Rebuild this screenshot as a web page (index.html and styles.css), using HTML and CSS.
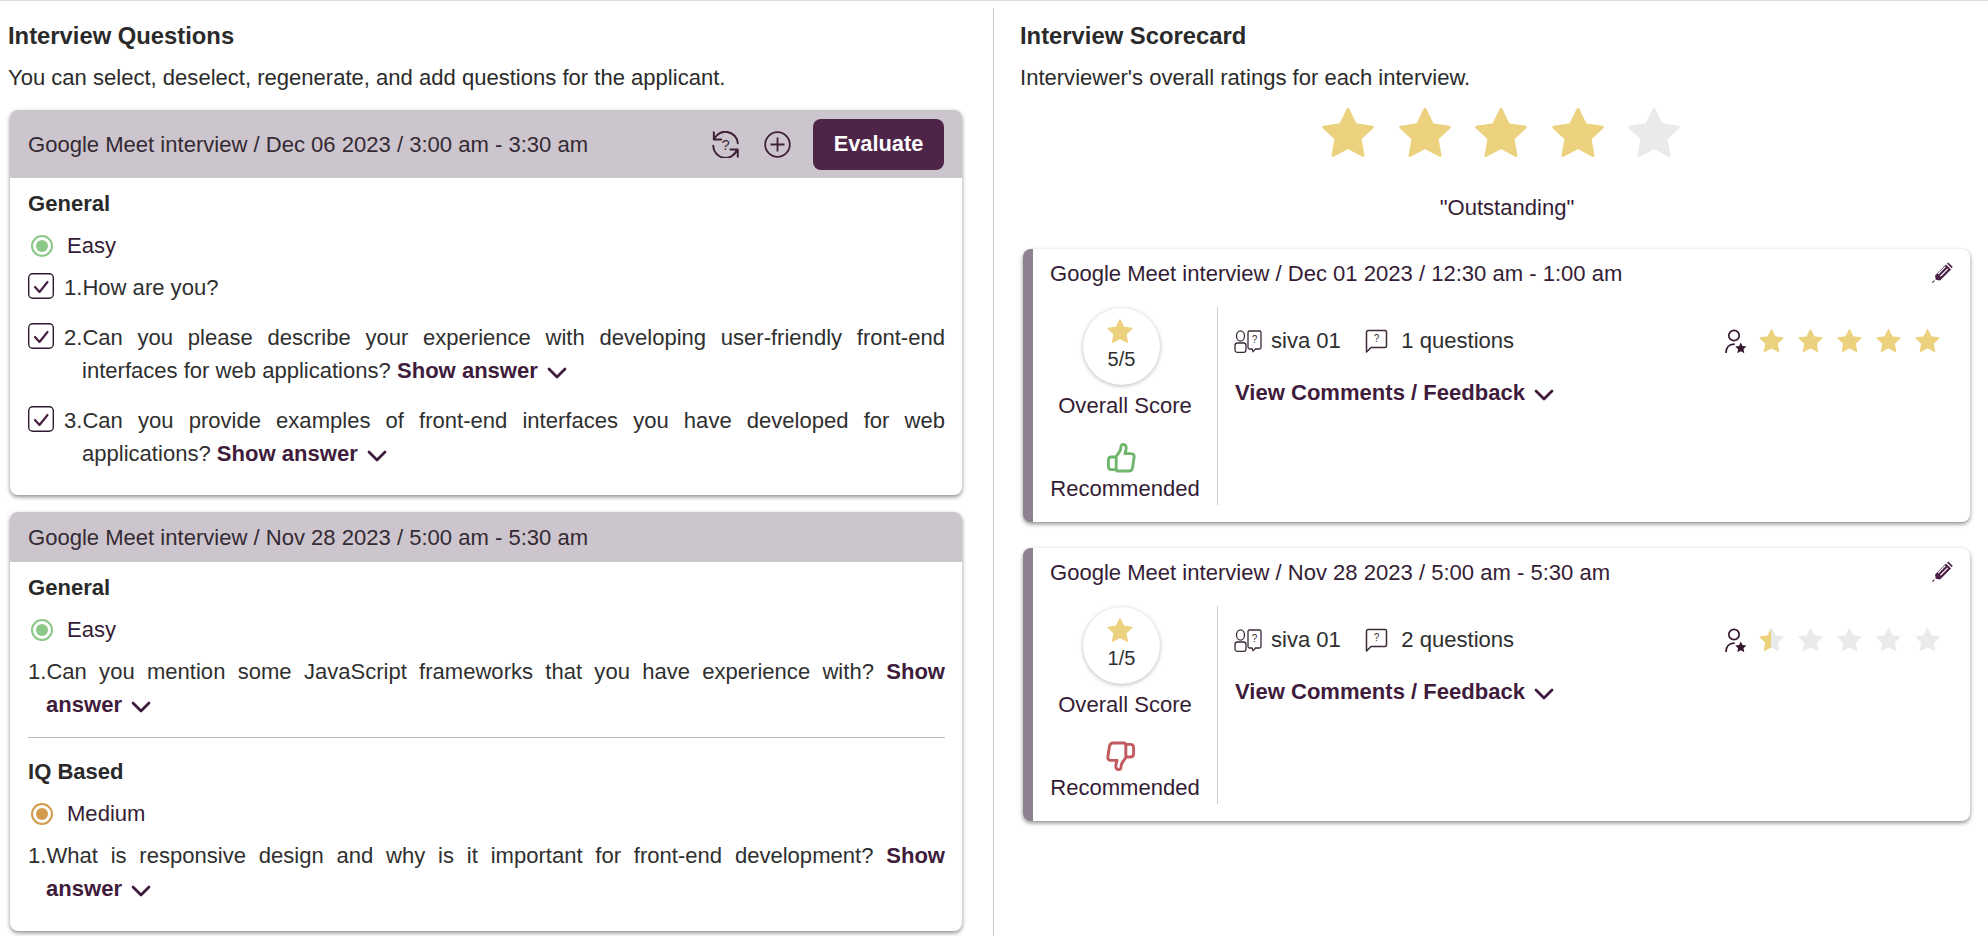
FILE: index.html
```html
<!DOCTYPE html>
<html lang="en">
<head>
<meta charset="utf-8">
<title>Interview</title>
<link rel="stylesheet" href="styles.css">
</head>
<body>
<svg class="sprite" aria-hidden="true">
  <defs>
    <linearGradient id="half-fill" x1="0" x2="1" y1="0" y2="0">
      <stop offset="0.5" stop-color="#ecd27f"/>
      <stop offset="0.5" stop-color="#e9ebeb"/>
    </linearGradient>
    <symbol id="star" viewBox="1 1.5 22 21">
      <path d="M12 2.500L15.060 8.790 22 9.800 16.950 14.600 18.200 21.500 12 18.200 5.800 21.500 7.050 14.600 2 9.800 8.940 8.790z" stroke-width="1.200" stroke-linejoin="round"/>
    </symbol>
    <symbol id="chev" viewBox="0 0 20 12">
      <path d="M2 2l8 8 8-8" fill="none" stroke="currentColor" stroke-width="2.800" stroke-linecap="round" stroke-linejoin="round"/>
    </symbol>
    <symbol id="check" viewBox="0 0 26 26">
      <rect x=".7" y=".7" width="24.600" height="24.600" rx="4" fill="none" stroke="#2e1a2e" stroke-width="1.400"/>
      <path d="M7 14l4.500 5L19.500 9" fill="none" stroke="#4a1f44" stroke-width="2.200" stroke-linecap="round" stroke-linejoin="round"/>
    </symbol>
    <symbol id="users" viewBox="0 0 28 24">
      <ellipse cx="6.500" cy="7" rx="4" ry="5.200" fill="none" stroke="#3a2a3a" stroke-width="1.300"/>
      <rect x="1" y="14" width="11" height="9.300" rx="2.400" fill="none" stroke="#3a2a3a" stroke-width="1.300"/>
      <path d="M15.500 2h10a1.500 1.500 0 0 1 1.500 1.500v15a1.500 1.500 0 0 1-1.500 1.500h-4l-2.500 2.600-1-2.600h-2.500a1.500 1.500 0 0 1-1.500-1.500v-15a1.500 1.500 0 0 1 1.500-1.500z" fill="none" stroke="#3a2a3a" stroke-width="1.300"/>
      <text x="20.500" y="13.500" class="glyph">?</text>
    </symbol>
    <symbol id="chat" viewBox="0 0 23 24">
      <path d="M1.500 23V3a1.500 1.500 0 0 1 1.500-1.500h17a1.500 1.500 0 0 1 1.500 1.500v14a1.500 1.500 0 0 1-1.500 1.500H6z" fill="none" stroke="#3a2a3a" stroke-width="1.500" stroke-linejoin="round"/>
      <text x="11.500" y="12.500" class="glyph">?</text>
    </symbol>
    <symbol id="rater" viewBox="0 0 22 24">
      <circle cx="9" cy="6.500" r="5.200" fill="none" stroke="#35182f" stroke-width="1.700"/>
      <path d="M1 23.500c0-5 3-8.300 8-8.300" fill="none" stroke="#35182f" stroke-width="1.700" stroke-linecap="round"/>
      <path d="M15.800 13.500l1.700 3.600 3.900.5-2.900 2.700.8 3.900-3.500-1.900-3.500 1.900.8-3.900-2.900-2.700 3.900-.5z" fill="#35182f"/>
    </symbol>
    <symbol id="pencil" viewBox="0 0 20 20">
      <path d="M.3 19.700l2-2" stroke="#4a1f44" stroke-width="1" fill="none"/>
      <path d="M3.500 17l-.6-4.200L13.300 2.400l4.800 4.800L7.700 17.600z" fill="#4a1f44"/>
      <path d="M5.800 11.400l7-7M8 13.600l7-7" stroke="#fff" stroke-width="1.100" fill="none"/>
      <path d="M14.300 1.400l1.200-1 4.200 4.200-1 1.300z" fill="#4a1f44"/>
    </symbol>
    <symbol id="thumb" viewBox="0 0 30 32">
      <path d="M10 15l3.500-5c1.200-1.700 1.500-3.200 1.500-5.200 0-3.300 5-3.300 5.300.8.200 2.400-.6 4.400-1.300 6.400h6.500c2.500 0 3.500 2 3 4l-1.600 10.500c-.4 2-1.700 3.500-3.700 3.500H12.500c-1.500 0-2.500-.8-2.500-2.500zM10 15.500H5C3 15.500 2 17 2 19v6c0 2 1 3.500 3 3.500h5" fill="none" stroke="currentColor" stroke-width="3" stroke-linejoin="round" stroke-linecap="round"/>
    </symbol>
  </defs>
</svg>

<main class="page">
  <section class="col col-left">
    <h2 class="title">Interview Questions</h2>
    <p class="sub">You can select, deselect, regenerate, and add questions for the applicant.</p>

    <article class="qcard">
      <header class="qhead qhead-tall">
        <span class="qhead-text">Google Meet interview / Dec 06 2023 / 3:00 am - 3:30 am</span>
        <svg class="ic-regen" viewBox="2 2 22 22">
          <path d="M3.500 3v6h6M3.700 9A10 10 0 0 1 23 12M23 23v-6h-6M22.500 17A10 10 0 0 1 3 14" fill="none" stroke="#3e2038" stroke-width="1.600" stroke-linecap="round" stroke-linejoin="round"/>
          <text x="13" y="17.500" class="glyph glyph-lg">?</text>
        </svg>
        <svg class="ic-plus" viewBox="0 0 27 27">
          <circle cx="13.500" cy="13.500" r="12.300" fill="none" stroke="#3e2038" stroke-width="1.800"/>
          <path d="M13.500 6.500v14M6.500 13.500h14" stroke="#3e2038" stroke-width="1.800"/>
        </svg>
        <button class="btn">Evaluate</button>
      </header>
      <div class="qbody qbody-short">
        <h3 class="group">General</h3>
        <div class="level"><span class="dot dot-easy"></span>Easy</div>
        <div class="qrow first">
          <svg class="check"><use href="#check"/></svg>
          <p class="q">1.How are you?</p>
        </div>
        <div class="qrow">
          <svg class="check"><use href="#check"/></svg>
          <p class="q">2.Can you please describe your experience with developing user-friendly front-end interfaces for web applications? <a class="more">Show answer <svg class="chev"><use href="#chev"/></svg></a></p>
        </div>
        <div class="qrow">
          <svg class="check"><use href="#check"/></svg>
          <p class="q">3.Can you provide examples of front-end interfaces you have developed for web applications? <a class="more">Show answer <svg class="chev"><use href="#chev"/></svg></a></p>
        </div>
      </div>
    </article>

    <article class="qcard">
      <header class="qhead">
        <span class="qhead-text">Google Meet interview / Nov 28 2023 / 5:00 am - 5:30 am</span>
      </header>
      <div class="qbody">
        <h3 class="group">General</h3>
        <div class="level"><span class="dot dot-easy"></span>Easy</div>
        <div class="qrow first">
          <p class="q">1.Can you mention some JavaScript frameworks that you have experience with? <a class="more">Show answer <svg class="chev"><use href="#chev"/></svg></a></p>
        </div>
        <hr class="rule">
        <h3 class="group group-after">IQ Based</h3>
        <div class="level"><span class="dot dot-medium"></span>Medium</div>
        <div class="qrow first">
          <p class="q">1.What is responsive design and why is it important for front-end development? <a class="more">Show answer <svg class="chev"><use href="#chev"/></svg></a></p>
        </div>
      </div>
    </article>
  </section>

  <section class="col col-right">
    <h2 class="title">Interview Scorecard</h2>
    <p class="sub">Interviewer's overall ratings for each interview.</p>
    <div class="bigstars">
      <svg class="bigstar on"><use href="#star"/></svg>
      <svg class="bigstar on"><use href="#star"/></svg>
      <svg class="bigstar on"><use href="#star"/></svg>
      <svg class="bigstar on"><use href="#star"/></svg>
      <svg class="bigstar off"><use href="#star"/></svg>
    </div>
    <p class="verdict">"Outstanding"</p>

    <article class="score">
      <header class="score-head">
        <span>Google Meet interview / Dec 01 2023 / 12:30 am - 1:00 am</span>
        <svg class="pencil"><use href="#pencil"/></svg>
      </header>
      <div class="score-body">
        <div class="overall">
          <div class="circle">
            <svg class="cstar on"><use href="#star"/></svg>
            <span class="cval">5/5</span>
          </div>
          <div class="olabel">Overall Score</div>
          <svg class="thumb up"><use href="#thumb"/></svg>
          <div class="olabel rec">Recommended</div>
        </div>
        <div class="detail">
          <div class="meta">
            <svg class="ic-users"><use href="#users"/></svg>
            <span class="meta-text">siva 01</span>
            <svg class="ic-chat"><use href="#chat"/></svg>
            <span class="meta-text">1 questions</span>
            <svg class="ic-rater"><use href="#rater"/></svg>
            <div class="stars">
              <svg class="star on"><use href="#star"/></svg>
              <svg class="star on"><use href="#star"/></svg>
              <svg class="star on"><use href="#star"/></svg>
              <svg class="star on"><use href="#star"/></svg>
              <svg class="star on"><use href="#star"/></svg>
            </div>
          </div>
          <a class="more comments">View Comments / Feedback <svg class="chev"><use href="#chev"/></svg></a>
        </div>
      </div>
    </article>

    <article class="score">
      <header class="score-head">
        <span>Google Meet interview / Nov 28 2023 / 5:00 am - 5:30 am</span>
        <svg class="pencil"><use href="#pencil"/></svg>
      </header>
      <div class="score-body">
        <div class="overall">
          <div class="circle">
            <svg class="cstar on"><use href="#star"/></svg>
            <span class="cval">1/5</span>
          </div>
          <div class="olabel">Overall Score</div>
          <svg class="thumb down"><use href="#thumb"/></svg>
          <div class="olabel rec">Recommended</div>
        </div>
        <div class="detail">
          <div class="meta">
            <svg class="ic-users"><use href="#users"/></svg>
            <span class="meta-text">siva 01</span>
            <svg class="ic-chat"><use href="#chat"/></svg>
            <span class="meta-text">2 questions</span>
            <svg class="ic-rater"><use href="#rater"/></svg>
            <div class="stars">
              <svg class="star" fill="url(#half-fill)" stroke="url(#half-fill)"><use href="#star"/></svg>
              <svg class="star off"><use href="#star"/></svg>
              <svg class="star off"><use href="#star"/></svg>
              <svg class="star off"><use href="#star"/></svg>
              <svg class="star off"><use href="#star"/></svg>
            </div>
          </div>
          <a class="more comments">View Comments / Feedback <svg class="chev"><use href="#chev"/></svg></a>
        </div>
      </div>
    </article>
  </section>
</main>
</body>
</html>
```

FILE: styles.css
```css
* { box-sizing: border-box; }
html, body { height: 100%; }
body {
  margin: 0;
  background: #fff;
  color: #2b2b2b;
  font: 22.05px/33px "Liberation Sans", Arial, sans-serif;
  overflow: hidden;
}
.sprite { position: absolute; width: 0; height: 0; }
.glyph {
  font: 10px "Liberation Sans", sans-serif;
  fill: #3a2a3a;
  text-anchor: middle;
}
.glyph-lg { font-size: 12px; }

.page {
  display: flex;
  height: 936px;
  border-top: 1px solid #dcdcdc;
}
.col { padding-top: 18px; }
.col-left { width: 993px; padding-left: 8px; flex: none; }
.col-right {
  flex: 1;
  min-width: 0;
  margin-top: 7px;
  padding: 11px 18px 0 26px;
  border-left: 1px solid #c9c9c9;
}
.title { margin: 0; font-size: 23.8px; line-height: 33px; font-weight: 700; color: #2a2a2a; }
.sub { margin: 9px 0 0; color: #2b2b2b; }

/* question cards */
.qcard {
  width: 952px;
  margin: 16px 0 17px 2px;
  border-radius: 8px;
  background: #fff;
  box-shadow: 0 2px 4px rgba(0, 0, 0, .45);
  overflow: hidden;
}
.qhead {
  display: flex;
  align-items: center;
  height: 50px;
  padding: 0 18px 0 18px;
  background: #cdc5cd;
  color: #342a33;
}
.qhead-tall { height: 68px; }
.qhead-text { flex: 1; }
.ic-regen { width: 27px; height: 27px; margin-right: 25px; }
.ic-plus { width: 27px; height: 27px; margin-right: 22px; }
.btn {
  width: 131px;
  height: 51px;
  border: 0;
  border-radius: 8px;
  background: #4e2548;
  color: #fff;
  font: 700 21.8px "Liberation Sans", Arial, sans-serif;
}
.qbody { padding: 9px 17px 26px 18px; }
.qbody-short { padding-bottom: 25px; }
.group { margin: 0; font-size: 22.05px; font-weight: 700; line-height: 33px; color: #2a2a2a; }
.group-after { margin-top: 17px; }
.level {
  display: flex;
  align-items: center;
  margin-top: 9px;
  color: #351c35;
}
.dot {
  width: 22px;
  height: 22px;
  margin-right: 14px;
  margin-left: 3px;
  border: 2px solid;
  border-radius: 50%;
  background-clip: content-box;
  padding: 3px;
}
.dot-easy { border-color: #8ac888; background-color: #8ac888; }
.dot-medium { border-color: #d39c4c; background-color: #d39c4c; }
.qrow { display: flex; align-items: flex-start; margin-top: 17px; }
.qrow.first { margin-top: 9px; }
.check { flex: none; width: 26px; height: 26px; margin: 2px 10px 0 0; }
.q {
  flex: 1;
  margin: 0;
  padding-left: 18px;
  text-indent: -18px;
  text-align: justify;
  color: #2f2f2f;
}
.more { font-weight: 700; color: #3f1c3c; }
.chev { display: inline-block; width: 20px; height: 12px; margin-left: 3px; vertical-align: -1px; color: #3f1c3c; }
.rule { height: 1px; margin: 16px 0 0; border: 0; background: #bdbdbd; }

/* right column */
.bigstars {
  display: flex;
  justify-content: center;
  gap: 22.5px;
  margin-top: 13px;
  padding-left: 12px;
}
.bigstar { width: 54px; height: 51px; }
.on { fill: #ecd27f; stroke: #ecd27f; }
.off { fill: #e9ebeb; stroke: #e9ebeb; }
.verdict {
  margin: 33px 0 0;
  padding-left: 24px;
  text-align: center;
  color: #351c35;
}

.score {
  margin: 25px 0 26px 3px;
  border-left: 10px solid #8e8090;
  border-radius: 8px;
  background: #fff;
  box-shadow: 0 2px 4px rgba(0, 0, 0, .45);
  height: 273px;
  padding-top: 8px;
}
.score-head {
  display: flex;
  justify-content: space-between;
  align-items: flex-start;
  height: 33px;
  padding: 0 17px 0 17px;
  color: #351c35;
}
.pencil { width: 21px; height: 21px; margin-top: 5px; }
.score-body { display: flex; margin-top: 17px; height: 198px; }
.overall {
  display: flex;
  flex-direction: column;
  align-items: center;
  flex: none;
  width: 185px;
  border-right: 1px solid #cfcfcf;
  color: #351c35;
}
.circle {
  display: flex;
  flex-direction: column;
  align-items: center;
  flex: none;
  width: 77px;
  height: 77px;
  margin: 1px 7px 0 0;
  padding-top: 10px;
  border-radius: 50%;
  box-shadow: 0 1px 4px rgba(0, 0, 0, .28);
}
.cstar { width: 26px; height: 26px; margin-left: -3px; }
.cval { font-size: 20px; line-height: 24px; margin-top: 3px; color: #2f2f2f; }
.olabel { margin-top: 4px; }
.circle + .olabel { margin-top: 4px; }
.thumb { width: 30px; height: 31px; margin: 20px 9px 0 0; flex: none; }
.thumb.up { color: #6fb76b; }
.thumb.down { color: #c35a5f; transform: rotate(180deg); }
.olabel.rec { margin-top: -1px; }
.detail { flex: 1; min-width: 0; padding: 17px 30px 0 17px; }
.meta { display: flex; align-items: center; height: 33px; }
.ic-users { width: 28px; height: 24px; flex: none; margin: 0 9px 0 -1px; }
.ic-chat { width: 23px; height: 24px; flex: none; margin: 0 13px 0 24.5px; }
.meta-text { color: #2f2f2f; }
.ic-rater { width: 22px; height: 24px; flex: none; margin-left: auto; margin-right: 12px; }
.stars { display: flex; gap: 14px; }
.star { width: 25px; height: 25px; }
.comments { display: block; margin-top: 19px; }
```
